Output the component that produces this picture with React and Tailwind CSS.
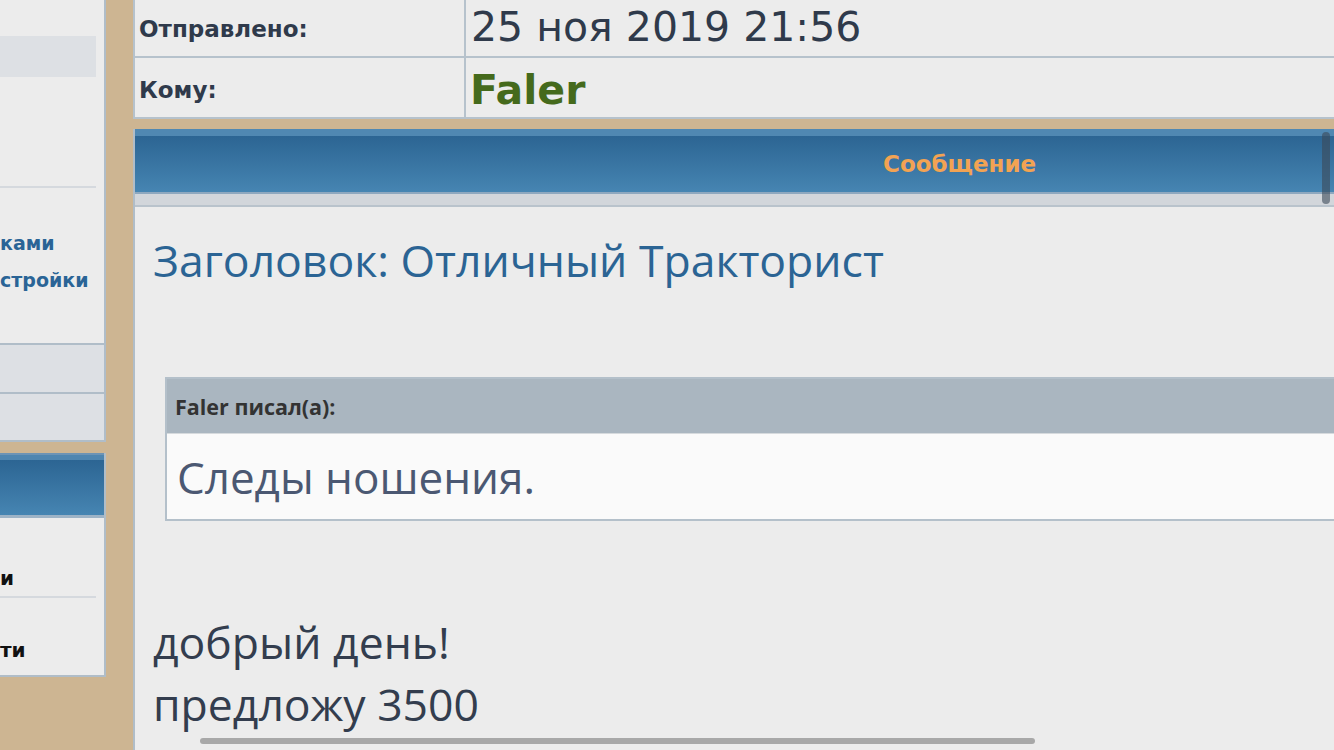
export default function App() {
  const bold = { fontFamily: '"DejaVu Sans", "Liberation Sans", sans-serif' };
  const soft = { fontFamily: '"Open Sans", "DejaVu Sans", sans-serif' };
  return (
    <div className="relative w-[1334px] h-[750px] overflow-hidden bg-[#cdb592] flex" style={bold}>
      {/* left column */}
      <div className="w-[106px] shrink-0 flex flex-col">
        <div className="h-[442px] bg-[#ececec] border-r-2 border-b-2 border-[#b0bdc8] flex flex-col">
          <div className="h-[36px]" />
          <div className="h-[41px] w-[96px] bg-[#dde0e4]" />
          <div className="h-[109px]" />
          <div className="h-[2px] w-[96px] bg-[#d5d9de]" />
          <div className="pt-[37px] text-[19px] font-bold leading-[37px] text-[#2a6496] whitespace-nowrap">
            <div>ками</div>
            <div>стройки</div>
          </div>
          <div className="flex-1" />
          <div className="h-[49px] border-t-2 border-[#b0bdc8] bg-[#dde0e4]" />
          <div className="h-[48px] border-t-2 border-[#b0bdc8] bg-[#dde0e4]" />
        </div>
        <div className="h-[11px]" />
        <div className="h-[224px] bg-[#ececec] border-r-2 border-b-2 border-[#b0bdc8] flex flex-col">
          <div className="h-[65px] flex flex-col">
            <div className="h-[2px] bg-[#6d94b5]" />
            <div className="h-[5px] bg-[#4f86b0]" />
            <div className="flex-1 bg-gradient-to-b from-[#2c6593] to-[#4685b2]" />
            <div className="h-[3px] bg-[#9db3c6]" />
          </div>
          <div className="pt-[48px] text-[20px] font-bold leading-[24px] text-[#111]">и</div>
          <div className="mt-[6px] h-[2px] w-[96px] bg-[#d5d9de]" />
          <div className="pt-[40px] text-[20px] font-bold leading-[24px] text-[#111]">ти</div>
        </div>
      </div>

      <div className="w-[27px] shrink-0" />

      {/* main column */}
      <div className="flex-1 min-w-0 flex flex-col">
        {/* top table */}
        <div className="bg-[#ececec] border-l-2 border-b-2 border-[#b6c2cc]">
          <div className="flex h-[58px] border-b-2 border-[#b6c2cc]">
            <div className="w-[331px] shrink-0 border-r-2 border-[#b6c2cc] pl-[4px] pt-[2px] flex items-center text-[23px] font-bold text-[#2f3a4b]">
              Отправлено:
            </div>
            <div className="flex-1 pl-[5px] flex items-center text-[41px] leading-none text-[#2f3a4b] -mt-[1px]">
              25 ноя 2019 21:56
            </div>
          </div>
          <div className="flex h-[59px]">
            <div className="w-[331px] shrink-0 border-r-2 border-[#b6c2cc] pl-[4px] pt-[6px] flex items-center text-[23px] font-bold text-[#2f3a4b]">
              Кому:
            </div>
            <div className="flex-1 pl-[4px] flex items-center text-[41px] font-bold leading-none text-[#456a1c] mt-[5px]">
              Faler
            </div>
          </div>
        </div>

        <div className="h-[10px] shrink-0" />

        {/* message panel */}
        <div className="relative flex-1 bg-[#ececec] border-l-2 border-[#b0bdc8] flex flex-col">
          <div className="h-[7px] bg-[#5088b2]" />
          <div className="h-[56px] bg-gradient-to-b from-[#2c6593] to-[#4685b2] flex items-center pl-[748px]">
            <span className="text-[23px] font-bold text-[#f2a353]">Сообщение</span>
          </div>
          <div className="h-[2px] bg-[#8ea8bf]" />
          <div className="h-[11px] bg-[#d2d6db]" />
          <div className="h-[2px] bg-[#b9c3cc]" />

          <div className="absolute right-[4px] top-[3px] w-[8px] h-[72px] rounded-full bg-[#3c4a58]/60" />

          <div className="pl-[18px] pt-[26px]" style={soft}>
            <div className="text-[44.5px] leading-[53px] text-[#2b6494] whitespace-nowrap">
              Заголовок: Отличный Тракторист
            </div>
          </div>

          <div className="ml-[30px] mt-[91px] w-[1300px] border-2 border-[#b4c0ca] flex flex-col" style={soft}>
            <div className="h-[54px] bg-[#aab6c0] flex items-center pl-[8px] pt-[2px] text-[21.5px] font-bold text-[#333]">
              Faler писал(а):
            </div>
            <div className="h-[1px] bg-[#d6dadd]" />
            <div className="h-[85px] bg-[#fafafa] flex items-center pl-[10px] text-[44px] text-[#4b5872]">
              Следы ношения.
            </div>
          </div>

          <div className="pl-[18px] pt-[90px] text-[44.5px] leading-[62px] text-[#333d4e] whitespace-nowrap" style={soft}>
            <div>добрый день!</div>
            <div>предложу 3500</div>
          </div>
        </div>
      </div>

      <div className="absolute left-[200px] top-[738px] w-[835px] h-[6px] rounded-full bg-[#a8a8a8]" />
    </div>
  );
}
